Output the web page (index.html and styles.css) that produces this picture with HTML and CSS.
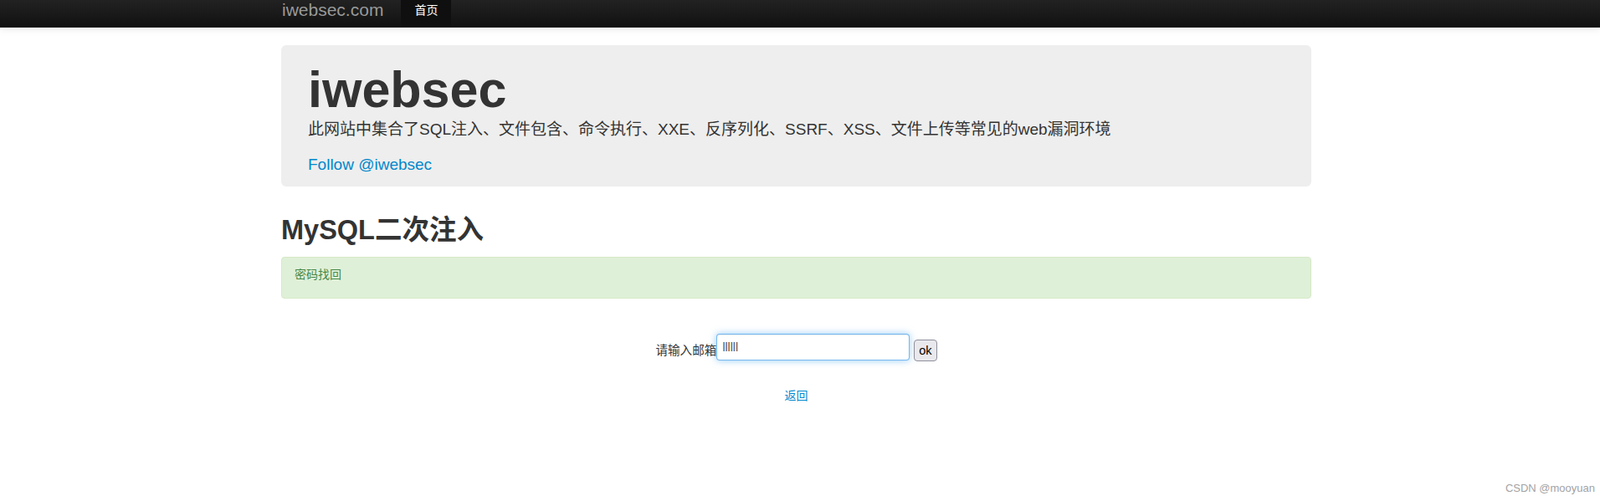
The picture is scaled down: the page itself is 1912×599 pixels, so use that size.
FILE: index.html
```html
<!DOCTYPE html>
<html lang="zh-CN">
    <head>
        <meta charset="UTF-8" />
        <meta name="viewport" content="width=device-width, initial-scale=1.0" />
        <title>MySQL二次注入</title>
        <link rel="stylesheet" href="styles.css">
    </head>
    <body>
        <div class="navbar">
            <div class="container nav-inner">
                <a class="brand" href="#">iwebsec.com</a>
                <ul class="nav">
                    <li class="active"><a href="#">首页</a></li>
                </ul>
            </div>
        </div>

        <div class="container">
            <div class="hero-unit">
                <h1>iwebsec</h1>
                <p>此网站中集合了SQL注入、文件包含、命令执行、XXE、反序列化、SSRF、XSS、文件上传等常见的web漏洞环境</p>
                <p><a href="#">Follow @iwebsec</a></p>
            </div>

            <h2>MySQL二次注入</h2>
            <div class="alert alert-success">密码找回</div>

            <form class="find-form" action="#"><label>请输入邮箱</label><input type="text" name="email" value="llllll"> <input type="submit" value="ok"></form>

            <p class="back"><a href="#">返回</a></p>
        </div>

        <div class="watermark">CSDN @mooyuan</div>
    </body>
</html>
```

FILE: styles.css
```css
body {
    margin: 0;
    font-family: "Liberation Sans", Arial, "Noto Sans CJK SC", sans-serif;
    font-size: 14px;
    line-height: 20px;
    color: #333;
    background-color: #fff;
    height: 599px;
    overflow: hidden;
}

a {
    color: #0088cc;
    text-decoration: none;
}

.container {
    width: 1231px;
    margin-left: calc(50% - 620px);
}

/* Top bar */
.navbar {
    height: 32px;
    background-color: #1b1b1b;
    background-image: linear-gradient(to bottom, #222, #111);
    border-bottom: 1px solid #252525;
    box-shadow: 0 1px 10px rgba(0, 0, 0, 0.1);
}

.nav-inner {
    display: flex;
}

.brand {
    display: block;
    padding: 2px 21px 0 1px;
    font-size: 21px;
    line-height: 20px;
    color: #999;
}

.nav {
    display: flex;
    margin: 0;
    padding: 0;
    list-style: none;
}

.nav li a {
    display: block;
    height: 30px;
    padding: 2px 16px 0;
    font-size: 14px;
    line-height: 20px;
    color: #fff;
}

.nav li.active a {
    background-color: #0f0f0f;
}

/* Hero block */
.hero-unit {
    margin-top: 21px;
    margin-bottom: 32px;
    padding: 23px 32px 11px;
    background-color: #eee;
    border-radius: 6px;
    font-size: 19px;
    line-height: 30px;
}

.hero-unit h1 {
    margin: 0 0 3px;
    font-size: 61px;
    line-height: 60px;
    font-weight: bold;
}

.hero-unit p {
    margin: 0 0 12px;
}

.hero-unit p:last-child {
    margin-bottom: 0;
}

h2 {
    margin: 0 0 12px;
    font-size: 32.5px;
    line-height: 40px;
    font-weight: bold;
}

/* Message box */
.alert {
    padding: 10px 15px 18px;
    border: 1px solid #d6e9c6;
    border-radius: 4px;
}

.alert-success {
    background-color: #dff0d8;
    color: #468847;
}

/* Mail form */
.find-form {
    margin: 42px 0 22px;
    text-align: center;
}

.find-form label {
    font-size: 14.6px;
}

.find-form input[type="text"] {
    box-sizing: border-box;
    width: 231px;
    height: 32px;
    margin: 0 5px 10px 0;
    padding: 4px 6px;
    font-family: inherit;
    font-size: 14px;
    line-height: 20px;
    color: #555;
    vertical-align: middle;
    border: 1px solid rgba(82, 168, 236, 0.8);
    border-radius: 4px;
    outline: none;
    box-shadow: inset 0 1px 1px rgba(0, 0, 0, 0.075), 0 0 8px rgba(82, 168, 236, 0.6);
}

.find-form input[type="submit"] {
    margin: 0 0 0 -4px;
    padding: 3px 5px;
    font-family: inherit;
    font-size: 14.5px;
    line-height: 18px;
    color: #000;
    background-color: #e9e9ed;
    border: 1px solid #8f8f9d;
    border-radius: 4px;
}

.back {
    margin: 0;
    text-align: center;
}

/* Corner watermark */
.watermark {
    position: absolute;
    right: 6px;
    bottom: 8px;
    font-size: 13px;
    line-height: 15px;
    color: #a3a3a3;
}
```
